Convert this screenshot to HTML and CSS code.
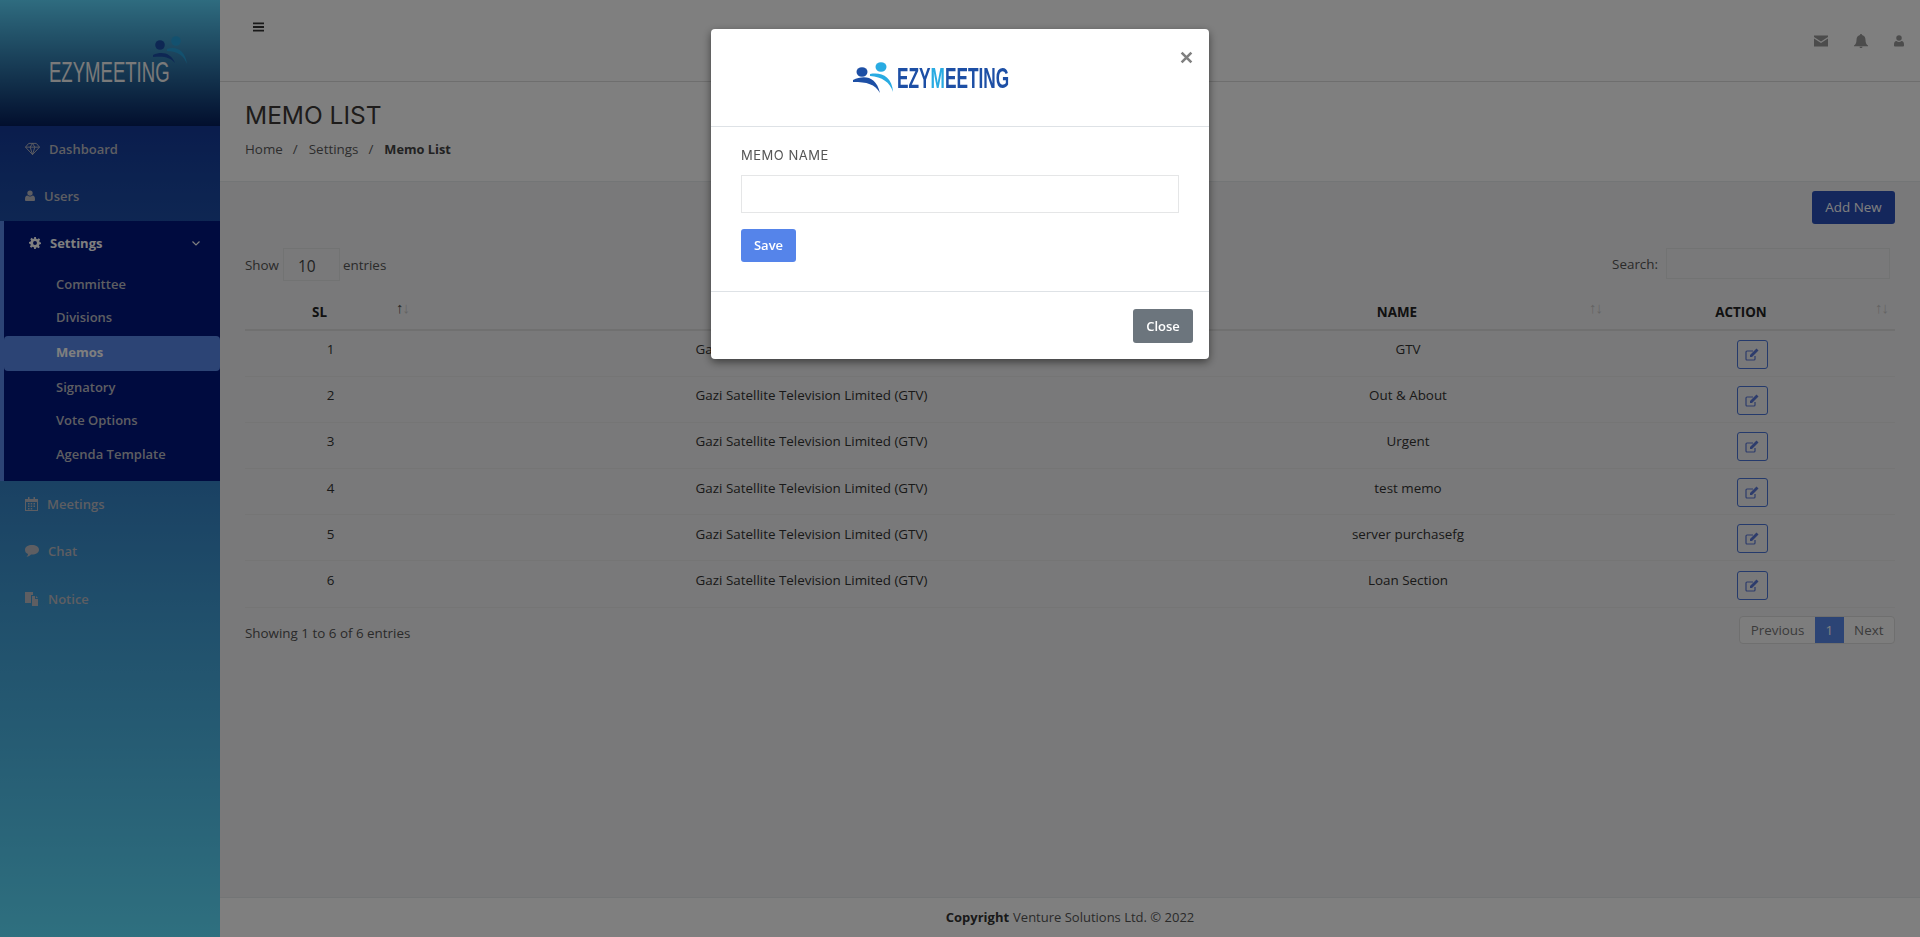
FILE: index.html
```html
<!DOCTYPE html>
<html lang="en">
  <head>
    <meta charset="UTF-8" />
    <title>Memo List</title>
    <link rel="stylesheet" href="styles.css">
  </head>
  <body>
    <div class="layout">
      <aside class="sidebar">
        <div class="brand">
          <svg width="170" height="100" viewBox="0 0 170 100">
            <circle cx="134" cy="45" r="4.800" fill="#1c4fa8"/>
            <circle cx="150" cy="41" r="4.800" fill="#27a3de"/>
            <path d="M127 55c9-4 18-2 22 8-5-6-11-7-22-6z" fill="#1c4fa8"/>
            <path d="M141 49c9-3 18 1 20 15-3-8-9-13-20-13z" fill="#27a3de"/>
            <g transform="translate(23 82) scale(.64 1)"><text class="brand-text">EZYMEETING</text></g>
          </svg>
        </div>
        <nav class="nav">
          <a class="nav-item"><svg class="ico ico-gem" viewBox="0 0 16 14"><path d="M4 1h8l3.500 4L8 13 .5 5zM.5 5h15M5.500 5 8 13l2.500-8L8 1 5.500 5z" fill="none" stroke="currentColor"/></svg>Dashboard</a>
          <a class="nav-item"><svg class="ico ico-sm" viewBox="0 0 12 14"><circle cx="6" cy="3.500" r="3.200" fill="currentColor"/><path d="M1 13c-1 0-1-1-1-2 0-3 1-4.500 3-4.500 2 1.500 4 1.500 6 0 2 0 3 1.500 3 4.500 0 1 0 2-1 2z" fill="currentColor"/></svg>Users</a>
          <div class="nav-group">
            <a class="nav-item nav-open"><svg class="ico ico-gear" viewBox="0 0 14 14"><path fill-rule="evenodd" d="M6 0h2l.4 2 1.300.6L11.500 1.500 13 3l-1.100 1.700.6 1.300 1.500.3v2l-1.900.4-.6 1.300 1.100 1.600-1.500 1.500-1.700-1.100-1.300.5L8 14H6l-.4-2-1.300-.5-1.700 1.100L1 11l1.100-1.600-.6-1.300L0 7.700v-2l1.900-.4.6-1.300L1.500 2.500 3 1l1.700 1.200L6 1.700zM7 4.700a2.300 2.300 0 1 0 0 4.600 2.300 2.300 0 0 0 0-4.600z" fill="currentColor"/></svg>Settings<svg class="chev" viewBox="0 0 8 5"><path d="M.5.500 4 4 7.500.5" fill="none" stroke="currentColor" stroke-width="1.200"/></svg></a>
            <a class="sub-item">Committee</a>
            <a class="sub-item">Divisions</a>
            <a class="sub-item sub-active">Memos</a>
            <a class="sub-item">Signatory</a>
            <a class="sub-item">Vote Options</a>
            <a class="sub-item">Agenda Template</a>
          </div>
          <a class="nav-item"><svg class="ico ico-md" viewBox="0 0 13 14"><path fill-rule="evenodd" d="M3 0h1.500v2h4V0H10v2h3v12H0V2h3zM1 5v8h11V5zM3 6h1.500v1.500H3zm2.700 0h1.500v1.500H5.700zm2.800 0H10v1.500H8.500zM3 8.500h1.500V10H3zm2.700 0h1.500V10H5.700zm2.800 0H10V10H8.500zM3 11h1.500v1.500H3zm2.700 0h1.500v1.500H5.700z" fill="currentColor"/></svg>Meetings</a>
          <a class="nav-item"><svg class="ico ico-lg" viewBox="0 0 14 12"><path d="M7 0c4 0 7 2 7 4.700S11 9.500 7 9.500H6C5 10.500 3.500 11.500 1.500 11.700 2.500 10.800 3 10 3 9 1 8.300 0 6.700 0 4.700 0 2 3 0 7 0z" fill="currentColor"/></svg>Chat</a>
          <a class="nav-item"><svg class="ico ico-lg" viewBox="0 0 14 14"><path fill-rule="evenodd" d="M0 0h8v3H6v8H0zM7 4h3v3h3v7H7zM11 4l2 2h-2z" fill="currentColor"/></svg>Notice</a>
        </nav>
      </aside>

      <div class="main">
        <header class="topbar">
          <svg class="burger" viewBox="0 0 12 10"><path d="M0 0h12v2H0zM0 4h12v2H0zM0 8h12v2H0z" fill="currentColor"/></svg>
          <div class="top-icons">
            <svg class="top-ico" viewBox="0 0 14 11"><path d="M0 0h14v1.500L7 6 0 1.500zM0 3l7 4.500L14 3v8H0z" fill="currentColor"/></svg>
            <svg class="top-ico" viewBox="0 0 14 14"><path d="M7 0c1 0 1 .7 1 1 2.500.5 3.500 2.500 3.500 5 0 3 1 4.500 2.500 5.500v.8H0v-.8C1.500 10.500 2.500 9 2.500 6c0-2.500 1-4.500 3.500-5 0-.3 0-1 1-1zM5.500 12.800h3C8.500 13.600 7.800 14 7 14s-1.500-.4-1.500-1.200z" fill="currentColor"/></svg>
            <svg class="top-ico top-ico-user" viewBox="0 0 12 14"><circle cx="6" cy="3.500" r="3.300" fill="currentColor"/><path d="M1 13.500c-1 0-1-1-1-2 0-3 1-4.500 3-4.500 2 1.500 4 1.500 6 0 2 0 3 1.500 3 4.500 0 1 0 2-1 2z" fill="currentColor"/></svg>
          </div>
        </header>

        <section class="page-head">
          <h2>MEMO LIST</h2>
          <ol class="crumbs">
            <li>Home</li>
            <li class="sep">/</li>
            <li>Settings</li>
            <li class="sep">/</li>
            <li class="crumb-now">Memo List</li>
          </ol>
        </section>

        <section class="content">
          <div class="actions"><button class="btn-add">Add New</button></div>
          <div class="table-tools">
            <div class="length">Show <span class="length-box">10</span> entries</div>
            <div class="search">Search: <span class="search-box"></span></div>
          </div>
          <table class="memos">
            <thead>
              <tr>
                <th class="col-sl">SL<span class="sort"><b>↑</b>↓</span></th>
                <th class="col-company">COMPANY<span class="sort">↑↓</span></th>
                <th class="col-name">NAME<span class="sort">↑↓</span></th>
                <th class="col-action">ACTION<span class="sort">↑↓</span></th>
              </tr>
            </thead>
            <tbody>
              <tr><td>1</td><td>Gazi Satellite Television Limited (GTV)</td><td>GTV</td><td><span class="btn-edit"><svg viewBox="0 0 14 13"><path d="M10 8v3a1 1 0 0 1-1 1H2a1 1 0 0 1-1-1V4a1 1 0 0 1 1-1h6" fill="none" stroke="currentColor" stroke-width="1.200"/><path d="M5 7l6.500-6.500 2 2L7 9H5z" fill="currentColor"/></svg></span></td></tr>
              <tr><td>2</td><td>Gazi Satellite Television Limited (GTV)</td><td>Out &amp; About</td><td><span class="btn-edit"><svg viewBox="0 0 14 13"><path d="M10 8v3a1 1 0 0 1-1 1H2a1 1 0 0 1-1-1V4a1 1 0 0 1 1-1h6" fill="none" stroke="currentColor" stroke-width="1.200"/><path d="M5 7l6.500-6.500 2 2L7 9H5z" fill="currentColor"/></svg></span></td></tr>
              <tr><td>3</td><td>Gazi Satellite Television Limited (GTV)</td><td>Urgent</td><td><span class="btn-edit"><svg viewBox="0 0 14 13"><path d="M10 8v3a1 1 0 0 1-1 1H2a1 1 0 0 1-1-1V4a1 1 0 0 1 1-1h6" fill="none" stroke="currentColor" stroke-width="1.200"/><path d="M5 7l6.500-6.500 2 2L7 9H5z" fill="currentColor"/></svg></span></td></tr>
              <tr><td>4</td><td>Gazi Satellite Television Limited (GTV)</td><td>test memo</td><td><span class="btn-edit"><svg viewBox="0 0 14 13"><path d="M10 8v3a1 1 0 0 1-1 1H2a1 1 0 0 1-1-1V4a1 1 0 0 1 1-1h6" fill="none" stroke="currentColor" stroke-width="1.200"/><path d="M5 7l6.500-6.500 2 2L7 9H5z" fill="currentColor"/></svg></span></td></tr>
              <tr><td>5</td><td>Gazi Satellite Television Limited (GTV)</td><td>server purchasefg</td><td><span class="btn-edit"><svg viewBox="0 0 14 13"><path d="M10 8v3a1 1 0 0 1-1 1H2a1 1 0 0 1-1-1V4a1 1 0 0 1 1-1h6" fill="none" stroke="currentColor" stroke-width="1.200"/><path d="M5 7l6.500-6.500 2 2L7 9H5z" fill="currentColor"/></svg></span></td></tr>
              <tr><td>6</td><td>Gazi Satellite Television Limited (GTV)</td><td>Loan Section</td><td><span class="btn-edit"><svg viewBox="0 0 14 13"><path d="M10 8v3a1 1 0 0 1-1 1H2a1 1 0 0 1-1-1V4a1 1 0 0 1 1-1h6" fill="none" stroke="currentColor" stroke-width="1.200"/><path d="M5 7l6.500-6.500 2 2L7 9H5z" fill="currentColor"/></svg></span></td></tr>
            </tbody>
          </table>
          <div class="table-foot">
            <div class="info">Showing 1 to 6 of 6 entries</div>
            <div class="pager">
              <span class="page">Previous</span><span class="page page-on">1</span><span class="page">Next</span>
            </div>
          </div>
        </section>

        <footer class="footer"><b>Copyright</b> Venture Solutions Ltd. © 2022</footer>
      </div>
    </div>

    <!-- modal sits over everything -->
    <div class="backdrop">
      <div class="modal">
        <div class="modal-head">
          <svg class="modal-logo" width="160" height="44" viewBox="0 0 160 44">
            <ellipse cx="11" cy="19" rx="5.500" ry="4.800" fill="#1d4fa5"/>
            <ellipse cx="30" cy="14" rx="5.500" ry="4.800" fill="#29abe2"/>
            <path d="M2 27c11-5 23-4 27 13-5-9-13-11-27-11z" fill="#1d4fa5"/>
            <path d="M19 21c11-2 22 2 23 18-3-10-11-15-23-16z" fill="#29abe2"/>
            <g transform="translate(46 35) scale(.575 1)"><text class="logo-text">EZY<tspan fill="#29abe2">M</tspan>EETING</text></g>
          </svg>
          <svg class="modal-x" viewBox="0 0 12 12"><path d="M1.500 1.500l9 9m0-9l-9 9" fill="none" stroke="currentColor" stroke-width="2.400"/></svg>
        </div>
        <div class="modal-body">
          <label class="field-label">MEMO NAME</label>
          <div class="field"></div>
          <button class="btn-save">Save</button>
        </div>
        <div class="modal-foot"><button class="btn-close">Close</button></div>
      </div>
    </div>
  </body>
</html>
```

FILE: styles.css
```css
* {
  box-sizing: border-box;
}
html, body {
  height: 100%;
}
body {
  margin: 0;
  overflow: hidden;
  font: 13.400px "Open Sans", sans-serif;
  color: #333;
  background: #f3f3f4;
}
.layout {
  display: flex;
  height: 937px;
}

/* sidebar */
.sidebar {
  width: 220px;
  flex: none;
  display: flex;
  flex-direction: column;
}
.brand {
  height: 126px;
  padding-left: 26px;
  background: linear-gradient(#5ed8ff, #041e5c);
}
.brand svg {
  display: block;
}
.brand-text {
  font: 29px "Liberation Sans", sans-serif;
  fill: #f4f4f4;
}
.nav {
  flex: 1;
  background: linear-gradient(#143a9a, #5ee0ff);
}
.nav-item {
  display: flex;
  align-items: center;
  height: 47.500px;
  padding: 0 0 2px 25px;
  font-size: 13px;
  font-weight: 600;
  color: #bcbcc4;
}
.ico {
  width: 15px;
  height: 14px;
  margin-right: 10px;
  flex: none;
}
.ico-gem {
  margin-right: 9px;
}
.ico-sm {
  width: 10px;
  margin-right: 9px;
}
.ico-md {
  width: 13px;
  margin-right: 9px;
}
.ico-lg {
  width: 14px;
  margin-right: 9px;
}
.ico-gear {
  width: 12px;
  margin: 0 9px 0 0;
}
.nav-group {
  height: 260px;
  border-left: 4px solid #5888ea;
  background: #00167e;
}
.nav-open {
  height: 44px;
  margin-bottom: 3px;
  padding: 0 0 0 25px;
  color: #fff;
  font-weight: 700;
}
.chev {
  width: 8px;
  height: 5px;
  margin-left: auto;
  margin-right: 20px;
}
.sub-item {
  display: flex;
  align-items: center;
  height: 33.500px;
  padding: 0 0 2px 52px;
  font-size: 13px;
  font-weight: 600;
  color: #bcbcc4;
}
.sub-active {
  height: 35px;
  margin-top: 1px;
  padding-bottom: 3px;
  background: #5888ea;
  border-radius: 4px;
  color: #fff;
  font-weight: 700;
}

/* main column */
.main {
  flex: 1;
  min-width: 0;
  display: flex;
  flex-direction: column;
}
.topbar {
  height: 82px;
  flex: none;
  display: flex;
  justify-content: space-between;
  padding: 22px 16px 0 33px;
  background: #fff;
  border-bottom: 1px solid #dcdcdc;
}
.burger {
  width: 11px;
  height: 10px;
  color: #333;
}
.top-icons {
  display: flex;
  gap: 26px;
  padding-top: 12px;
  color: #989898;
}
.top-ico {
  width: 14px;
  height: 14px;
}
.top-ico-user {
  width: 10px;
}
.page-head {
  height: 100px;
  flex: none;
  padding: 17px 25px 0;
  background: #fff;
  border-bottom: 1px solid #e7eaec;
}
.page-head h2 {
  margin: 0;
  font: 400 24.500px/32px "Inter", sans-serif;
  color: #3c3836;
}
.crumbs {
  display: flex;
  gap: 10px;
  list-style: none;
  margin: 9px 0 0;
  padding: 0;
  color: #5b5b5b;
}
.sep {
  margin-right: 1px;
}
.crumb-now {
  font-size: 12.800px;
  line-height: 18px;
  font-weight: 700;
  color: #444;
}

.content {
  flex: 1;
  padding: 9px 25px 0;
  background: #f3f3f4;
}
.actions {
  display: flex;
  justify-content: flex-end;
}
.btn-add {
  width: 83px;
  height: 33px;
  padding-bottom: 2px;
  border: 0;
  border-radius: 3px;
  background: #284eb8;
  color: #fff;
  font: 13.400px "Open Sans", sans-serif;
}
.table-tools {
  display: flex;
  justify-content: space-between;
  align-items: flex-start;
  margin-top: 24px;
  height: 33px;
}
.length, .search {
  display: flex;
  align-items: center;
  color: #555;
}
.length {
  line-height: 30px;
}
.length-box {
  width: 57px;
  height: 33px;
  margin: 0 3px 0 4px;
  padding: 2px 0 0 14px;
  border: 1px solid #e5e6e7;
  font-size: 15.500px;
  color: #444;
}
.search-box {
  width: 224px;
  height: 31px;
  margin-left: 8px;
  margin-right: 5px;
  border: 1px solid #e5e6e7;
}
.memos {
  width: 100%;
  margin-top: 14px;
  border-collapse: collapse;
  table-layout: fixed;
  color: #333;
}
.memos th {
  position: relative;
  height: 35px;
  padding: 0 22px 0 0;
  border-bottom: 2px solid #e0e0e0;
  font-size: 13.400px;
  font-weight: 700;
  text-align: center;
  color: #222;
}
.col-sl {
  width: 171px;
}
.col-company {
  width: 791px;
}
.col-name {
  width: 402px;
}
.sort {
  position: absolute;
  right: 7px;
  top: 2px;
  font-size: 15px;
  font-weight: 400;
  letter-spacing: -1px;
  color: #c8c8c8;
}
.sort b {
  font-weight: 400;
  color: #555;
}
.memos td {
  height: 46.200px;
  padding: 0 0 8px;
  border-bottom: 1px solid #eaeaea;
  text-align: center;
  vertical-align: middle;
}
.memos td:last-child {
  padding: 2px 0 0;
}
.btn-edit {
  display: inline-flex;
  align-items: center;
  justify-content: center;
  width: 31px;
  height: 29px;
  border: 1px solid #4a74d8;
  border-radius: 3px;
  color: #5b78d8;
}
.btn-edit svg {
  width: 14px;
  height: 13px;
}
.table-foot {
  display: flex;
  justify-content: space-between;
  align-items: center;
  margin-top: 8px;
}
.info {
  margin-top: 6px;
  color: #555;
}
.pager {
  display: flex;
  height: 28px;
  border: 1px solid #dedede;
  border-radius: 4px;
  background: #fbfbfb;
  color: #777;
}
.page {
  display: flex;
  align-items: center;
  padding: 0 10.500px;
}
.page-on {
  background: #5888ea;
  color: #fff;
}
.footer {
  height: 40px;
  flex: none;
  display: flex;
  align-items: center;
  justify-content: center;
  gap: 4px;
  padding-bottom: 2px;
  background: #fff;
  border-top: 1px solid #e7eaec;
  color: #555;
  font-size: 13px;
}
.footer b {
  color: #333;
}

/* modal */
.backdrop {
  position: fixed;
  inset: 0;
  display: flex;
  justify-content: center;
  align-items: flex-start;
  padding-top: 29px;
  background: rgba(0, 0, 0, .5);
}
.modal {
  width: 498px;
  background: #fff;
  border-radius: 4px;
  box-shadow: 0 3px 9px rgba(0, 0, 0, .5);
}
.modal-head {
  position: relative;
  height: 98px;
  padding: 24px 0 0 140px;
  border-bottom: 1px solid #dee2e6;
}
.modal-logo {
  display: block;
}
.logo-text {
  font: 700 30px "Liberation Sans", sans-serif;
  fill: #1d4fa5;
}
.modal-x {
  position: absolute;
  right: 16px;
  top: 22px;
  width: 13px;
  height: 13px;
  color: #808080;
}
.modal-body {
  height: 165px;
  padding: 20px 30px 0;
  border-bottom: 1px solid #dee2e6;
}
.field-label {
  display: block;
  font: 400 13px/17px "Inter", sans-serif;
  letter-spacing: .5px;
  color: #555;
}
.field {
  height: 38px;
  margin-top: 11px;
  border: 1px solid #e5e6e7;
}
.btn-save {
  display: block;
  width: 55px;
  height: 33px;
  margin-top: 16px;
  padding-bottom: 3px;
  border: 0;
  border-radius: 3px;
  background: #5584ea;
  color: #fff;
  font: 600 13px "Open Sans", sans-serif;
}
.modal-foot {
  display: flex;
  justify-content: flex-end;
  padding: 17px 16px 16px;
}
.btn-close {
  width: 60px;
  height: 34px;
  padding-bottom: 2px;
  border: 0;
  border-radius: 3px;
  background: #6c757d;
  color: #fff;
  font: 600 13px "Open Sans", sans-serif;
}
```
